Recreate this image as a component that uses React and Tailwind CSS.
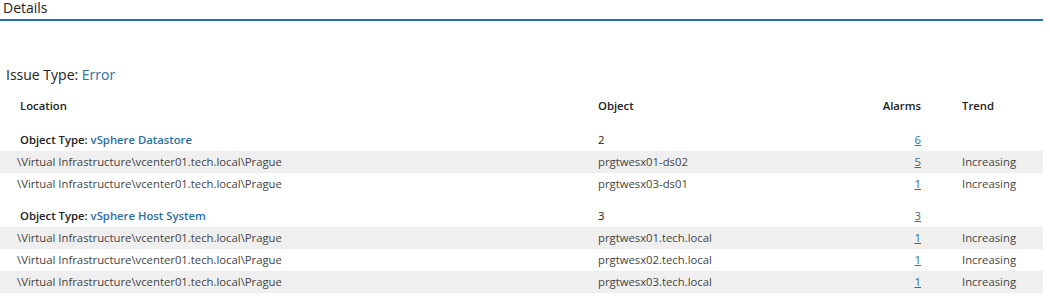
import React from "react";

const groups = [
  {
    type: "vSphere Datastore",
    count: 2,
    alarms: 6,
    rows: [
      { obj: "prgtwesx01-ds02", alarms: 5, trend: "Increasing" },
      { obj: "prgtwesx03-ds01", alarms: 1, trend: "Increasing" },
    ],
  },
  {
    type: "vSphere Host System",
    count: 3,
    alarms: 3,
    rows: [
      { obj: "prgtwesx01.tech.local", alarms: 1, trend: "Increasing" },
      { obj: "prgtwesx02.tech.local", alarms: 1, trend: "Increasing" },
      { obj: "prgtwesx03.tech.local", alarms: 1, trend: "Increasing" },
    ],
  },
];

const location = "\\Virtual Infrastructure\\vcenter01.tech.local\\Prague";

const Row = ({ shaded, children }) => (
  <div className={`flex h-[22px] items-center ${shaded ? "bg-[#efefef]" : ""}`}>
    {children}
  </div>
);

const App = () => {
  return (
    <div
      className="w-[1050px] h-[300px] bg-white text-[11.3px] text-[#444]"
      style={{ fontFamily: '"Open Sans", "Noto Sans", sans-serif' }}
    >
      {/* HEADER */}
      <div className="w-[1043px] border-b-2 border-[#2470a8] h-[21px] pl-[3px] text-[14px] leading-[16px] text-[#222]">
        Details
      </div>

      <div className="mt-[45px] pl-[6px] text-[14px] leading-[18px] text-[#222]">
        Issue Type: <span className="text-[#2d6ea3]">Error</span>
      </div>

      {/* TABLE */}
      <div className="w-[1043px] mt-[11px]">
        <div className="flex h-[22px] items-center font-semibold text-[#222]">
          <div className="w-[590px] pl-[20px]">Location</div>
          <div className="w-[240px] pl-[8px]">Object</div>
          <div className="w-[125px] pr-[34px] text-right">Alarms</div>
          <div className="flex-1 pl-[7px]">Trend</div>
        </div>

        {groups.map((g, gi) => (
          <div key={g.type} className={gi === 0 ? "mt-[12px]" : "mt-[10px]"}>
            <div className="flex h-[22px] items-center">
              <div className="w-[590px] pl-[20px] font-semibold text-[#222]">
                Object Type: <span className="text-[#2d6ea3]">{g.type}</span>
              </div>
              <div className="w-[240px] pl-[8px] text-[#222]">{g.count}</div>
              <div className="w-[125px] pr-[34px] text-right">
                <a href="#" className="text-[#2d6ea3] underline">{g.alarms}</a>
              </div>
              <div className="flex-1 pl-[7px]"></div>
            </div>
            {g.rows.map((r, i) => (
              <Row key={r.obj} shaded={i % 2 === 0}>
                <div className="w-[590px] pl-[17px]">{location}</div>
                <div className="w-[240px] pl-[8px]">{r.obj}</div>
                <div className="w-[125px] pr-[34px] text-right">
                  <a href="#" className="text-[#2d6ea3] underline">{r.alarms}</a>
                </div>
                <div className="flex-1 pl-[7px]">{r.trend}</div>
              </Row>
            ))}
          </div>
        ))}
      </div>
    </div>
  );
};

export default App;
